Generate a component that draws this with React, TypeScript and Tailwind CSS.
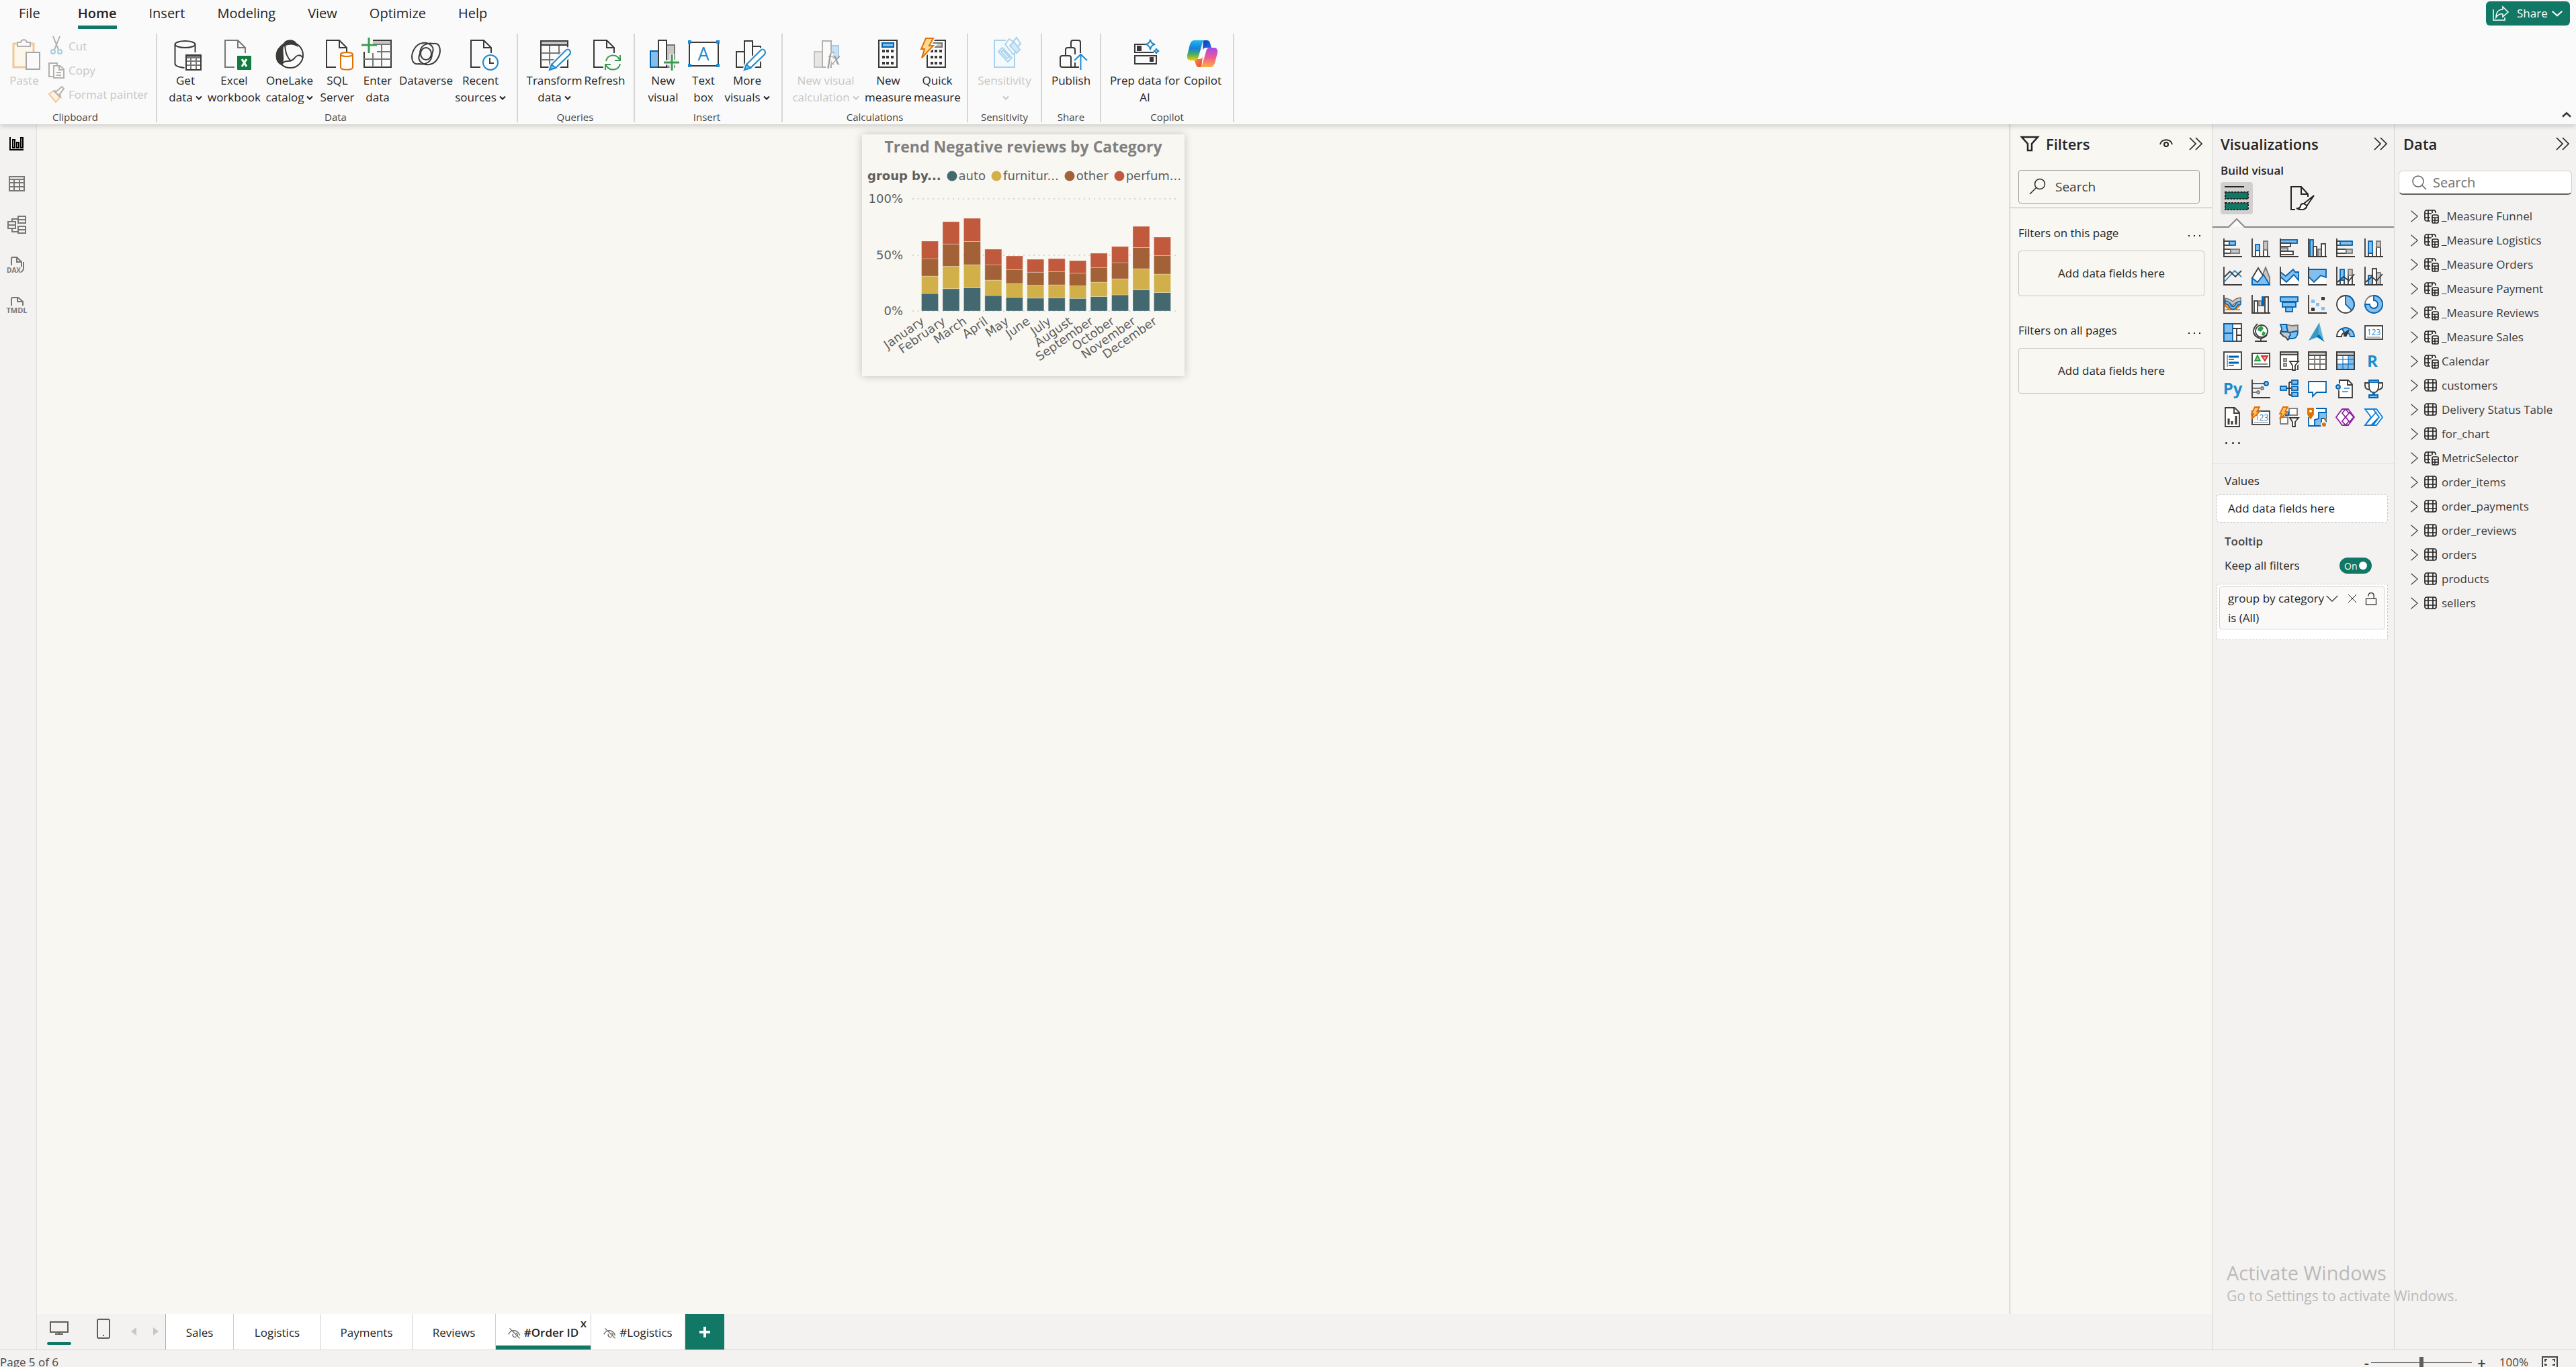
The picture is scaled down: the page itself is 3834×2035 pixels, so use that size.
import React from "react";

const D = "#3b3a39";
const G = "#797775";
const LG = "#c8c6c4";
const B = "#83beec";
const BS = "#0063b1";
const SB = "#1e8bcd";
const GR = "#3d9b51";
const W = "#fafafa";

type P = { children: React.ReactNode };

/* ---------- ribbon icons, drawn on a 48px board ---------- */

const Big = ({ children }: P) => (
  <svg viewBox="0 0 48 48" className="h-12 w-12 shrink-0 overflow-visible" fill="none" stroke={D} strokeWidth="2" aria-hidden="true">
    {children}
  </svg>
);

const Page = ({ x, c = D }: { x: number; c?: string }) => (
  <g stroke={c}>
    <path d={`M${x + 14} 43H${x}V3H${x + 19}L${x + 30} 14V22`} fill="none" />
    <path d={`M${x + 19} 3V14H${x + 30}`} />
  </g>
);

const Pencil = () => (
  <g>
    <path d="M17 48l3-9L41 18q4-4 7 0q2 3-1 6L27 45z" fill={W} stroke={W} strokeWidth="6" />
    <path d="M17 47l3-8L41 18q3-3 6 0q2 3 0 6L26 44z" fill="#fff" stroke={SB} />
    <path d="M17 47l3-8 6 5z" fill={B} stroke={SB} />
  </g>
);

const Bolt = () => <path d="M7 0H18L12 11H18L1 29L5 16H0Z" fill="#ffd992" stroke="#e07000" strokeWidth="2" />;

const Calc = ({ x, c, cs }: { x: number; c: string; cs: string }) => (
  <g>
    <rect x={x} y="3" width="27" height="40" fill={W} />
    <rect x={x + 5} y="7" width="17" height="6" fill={c} stroke={cs} />
    {[17, 26, 35].map((y) =>
      [5, 11, 18].map((dx) => <rect key={`${y}-${dx}`} x={x + dx} y={y} width="4" height="4" fill={D} stroke="none" />)
    )}
  </g>
);

const PasteIcon = () => (
  <Big>
    <rect x="8" y="8" width="30" height="35" stroke="#f2c79a" strokeWidth="3" fill="#fdf6ea" />
    <path d="M14 12V6h5c1-5 8-5 9 0h5v6z" fill={W} stroke="#b3b0ad" />
    <rect x="27" y="21" width="20" height="25" fill="#fafafa" stroke="#a6a6a6" />
  </Big>
);
const GetDataIcon = () => (
  <Big>
    <ellipse cx="23.500" cy="9" rx="15" ry="5" />
    <path d="M8.500 9V38c0 3 6 5 14 6M38.500 9V21" />
    <rect x="25" y="25" width="22" height="22" fill="#fff" />
    <path d="M25 28h22" stroke={G} strokeWidth="4" />
    <path d="M25 34h22M25 40h22M32 30v17M40 30v17" stroke={G} />
    <rect x="25" y="25" width="22" height="22" />
  </Big>
);
const ExcelIcon = () => (
  <Big>
    <Page x={10} c={G} />
    <rect x="28" y="26" width="21" height="21" rx="1" fill="#107c41" stroke="none" />
    <path d="M35 31l7 11M42 31l-7 11" stroke="#fff" strokeWidth="3" />
  </Big>
);
const OneLakeIcon = () => (
  <Big>
    <circle cx="25" cy="25" r="19" />
    <path d="M14 12C17 1 31 0 35 11C28 7 21 8 14 12Z" fill={D} />
    <path d="M12 12C2 18 2 34 12 39C17 32 12 24 14 12Z" fill={D} />
    <path d="M17 10C18 22 20 28 26 34" />
    <path d="M12 39C18 30 24 38 31 30C35 24 40 24 44 29" />
  </Big>
);
const SqlIcon = () => (
  <Big>
    <Page x={8} />
    <path d="M29 24v19c0 5 18 5 18 0V24" fill="#fff" stroke="#e07000" />
    <ellipse cx="38" cy="24" rx="9" ry="3" fill="#fff" stroke="#e07000" />
  </Big>
);
const EnterIcon = () => (
  <Big>
    <rect x="17" y="3" width="27" height="5" fill={LG} stroke="none" />
    <path d="M4 20V43H44V3H17" />
    <path d="M17 9H44M23 20H44M4 31H44M17 22V43M30 9V43" stroke={G} />
    <path d="M11 -1V22M0 10H23" stroke={GR} strokeWidth="3" />
  </Big>
);
const DataverseIcon = () => (
  <Big>
    <ellipse cx="24" cy="23" rx="8" ry="9" />
    <path d="M33 23C33 35 24 40 13 38C2 40 1 26 6 17C12 5 26 4 33 12C36 16 34 21 33 23Z" />
    <path d="M15 23C15 11 24 6 35 8C46 6 47 20 42 29C36 41 22 42 15 34C12 30 14 25 15 23Z" />
  </Big>
);
const RecentIcon = () => (
  <Big>
    <Page x={10} />
    <circle cx="39" cy="36" r="11" fill="#fff" stroke={SB} />
    <path d="M38 29V37H44" />
  </Big>
);
const TransformIcon = () => (
  <Big>
    <rect x="4" y="4" width="40" height="39" />
    <path d="M4 22H44M4 32H44M17 10V43M31 10V43" stroke={G} />
    <rect x="4" y="4" width="40" height="6" fill={LG} />
    <Pencil />
  </Big>
);
const RefreshIcon = () => (
  <Big>
    <Page x={8} />
    <g stroke={GR} strokeWidth="2">
      <path d="M26 34C28 24 42 22 46 32M47 25V33H39" />
      <path d="M47 38C45 48 31 50 26 40M25 47V39H33" />
    </g>
  </Big>
);
const NewVisualIcon = () => (
  <Big>
    <rect x="5" y="19" width="12" height="24" fill={B} stroke={BS} />
    <rect x="29" y="10" width="12" height="33" fill={LG} stroke={G} />
    <rect x="17" y="3" width="12" height="40" fill="#fff" />
    <path d="M37 23V49M24 36H49" stroke={W} strokeWidth="7" />
    <path d="M37 24V48M25 36H48" stroke={GR} strokeWidth="3" />
  </Big>
);
const TextBoxIcon = () => (
  <Big>
    <rect x="3" y="6" width="43" height="35" fill="#fff" />
    {[[1, 3], [43, 3], [1, 38], [43, 38]].map(([x, y]) => (
      <rect key={`${x}-${y}`} x={x} y={y} width="5" height="5" fill={SB} stroke="none" />
    ))}
    <text x="24" y="33" textAnchor="middle" fontSize="27" fill={SB} stroke="none">A</text>
  </Big>
);
const MoreVisualsIcon = () => (
  <Big>
    <rect x="8" y="20" width="12" height="23" />
    <rect x="32" y="12" width="12" height="31" />
    <rect x="20" y="4" width="12" height="39" fill={W} />
    <g transform="translate(3 0)"><Pencil /></g>
  </Big>
);
const VisualCalcIcon = () => (
  <Big>
    <rect x="7" y="20" width="12" height="23" fill="#e6e6e6" stroke="#c2c2c2" />
    <rect x="32" y="11" width="11" height="18" fill="#c9e1f5" stroke="#a6cbe8" />
    <rect x="19" y="4" width="13" height="39" fill={W} stroke="#b3b0ad" />
    <path d="M28 20h8l-6 24h-6z" fill={W} stroke="none" />
    <text x="26" y="39" fontSize="27" fontStyle="italic" fontFamily="Liberation Serif, serif" fill="#9a9a9a" stroke="none">fx</text>
  </Big>
);
const NewMeasureIcon = () => <Big><Calc x={10} c={B} cs={BS} /></Big>;
const QuickMeasureIcon = () => <Big><Calc x={9} c={LG} cs={G} /><path d="M7 0H18L12 11H18L1 29L5 16H0Z" fill={W} stroke={W} strokeWidth="6" /><Bolt /></Big>;
const SensitivityIcon = () => (
  <Big>
    <g stroke="#a9d2ec">
      <path d="M26 3H9V43H39V24" fill="#f3fafe" />
      <path d="M21 15l14 17-6 0z" stroke="none" />
      <path d="M15 20l6-6 14 15-6 6z" fill={W} />
      <path d="M19 20l3-2 9 10-3 2z" />
      <path d="M25 9l6-8 6 4 5-6 6 9-5 5 2 4-8 7z" fill={W} />
      <path d="M32 11l6-6 9 12-5 5z" fill="#d3eaf8" />
    </g>
  </Big>
);
const PublishIcon = () => (
  <Big>
    <path d="M38 22V6q0-3-3-3H27q-3 0-3 3V15M24 43V29q0-3-3-3H11q-3 0-3 3V40q0 3 3 3H36M16 26V17q0-3 3-3h8q3 0 3 3V24M30 36V43" />
    <path d="M38.500 47V24M29 33l9.500-9 9.500 9" stroke={SB} />
  </Big>
);
const PrepIcon = () => (
  <Big>
    <path d="M25 9H9V21H37" /><rect x="9" y="26" width="32" height="12" />
    <rect x="13" y="12" width="5" height="6" fill={D} stroke={D} /><rect x="32" y="29" width="4" height="5" fill={D} stroke={D} />
    <path d="M32 2q1 6 7 7q-6 1-7 8q-1-7-7-8q6-1 7-7z" fill="#fff" stroke={SB} />
    <path d="M41 15q0 3 4 4q-4 1-4 4q0-3-4-4q4-1 4-4z" fill="#fff" stroke={SB} />
  </Big>
);
const CopilotIcon = () => (
  <svg viewBox="0 0 48 48" className="h-12 w-12 overflow-visible" aria-hidden="true">
    <defs>
      <linearGradient id="cpA" x1="0" y1="0" x2="0" y2="1"><stop offset="0" stopColor="#22b8f0" /><stop offset=".4" stopColor="#1580d8" /><stop offset=".7" stopColor="#4cb060" /><stop offset="1" stopColor="#ffcb05" /></linearGradient>
      <linearGradient id="cpB" x1="0" y1="0" x2="0" y2="1"><stop offset="0" stopColor="#a348f0" /><stop offset=".5" stopColor="#ee5a90" /><stop offset="1" stopColor="#ffb040" /></linearGradient>
      <linearGradient id="cpC" x1="0" y1="0" x2="1" y2="1"><stop offset="0" stopColor="#0a36b8" /><stop offset="1" stopColor="#2a78e6" /></linearGradient>
      <linearGradient id="cpD" x1="0" y1="0" x2="1" y2="1"><stop offset="0" stopColor="#ff9a3c" /><stop offset="1" stopColor="#e3403e" /></linearGradient>
    </defs>
    <path d="M25 3h5q4 0 5 4l2 7h-8q-4 0-5 4z" fill="url(#cpC)" />
    <path d="M22 43h-4q-3 0-4-4l-3-8h8q4 0 5-4z" fill="url(#cpD)" />
    <path d="M11 3h16q-3 1-4 6l-5 18q-1 5-5 6H6q-6 0-5-8L5 9q2-6 6-6z" fill="url(#cpA)" />
    <path d="M36 43H19q4-1 5-6l5-17q1-6 5-6h7q6 0 5 8l-4 15q-2 6-6 6z" fill="url(#cpB)" />
  </svg>
);

/* ---------- small icons ---------- */

const Sm = ({ children, className }: P & { className: string }) => (
  <svg viewBox="0 0 24 24" className={`shrink-0 overflow-visible ${className}`} fill="none" stroke="currentColor" strokeWidth="2" aria-hidden="true">
    {children}
  </svg>
);
const DoubleChevron = () => <Sm className="h-6 w-6"><path d="M3 3l9 9-9 9M12 3l9 9-9 9" strokeWidth="1.700" /></Sm>;
const Caret = () => (
  <svg viewBox="0 0 10 8" className="ml-1 inline-block h-2 w-2.5" fill="none" stroke="currentColor" strokeWidth="2" aria-hidden="true">
    <path d="M1 1.500l4 4 4-4" />
  </svg>
);
const HiddenEye = () => (
  <Sm className="h-5 w-5 text-[#605e5c]">
    <path d="M3 4l18 18M1 15q3-7 10-7q8 1 10 9M9 14a4 4 0 0 0 6 5M14 12q4 2 3 6" strokeWidth="1.500" />
  </Sm>
);

/* ---------- visual gallery icons, drawn on a 28px board ---------- */

const ax = <path d="M1 0V27H28" stroke={D} />;
const r = (x: number, y: number, w: number, h: number, f: string, s: string) => (
  <rect key={`${x}-${y}-${w}-${h}`} x={x} y={y} width={w} height={h} fill={f} stroke={s} />
);

const gallery: [string, React.ReactNode][] = [
  ["Stacked bar chart", <>{r(1, 4, 8, 6, "#fff", D)}{r(9, 4, 9, 6, B, BS)}{r(1, 16, 10, 6, "#fff", D)}{r(11, 16, 13, 6, LG, G)}{ax}</>],
  ["Stacked column chart", <>{r(6, 18, 6, 9, "#fff", D)}{r(6, 9, 6, 9, B, BS)}{r(18, 17, 6, 10, "#fff", D)}{r(18, 4, 6, 13, LG, G)}{ax}</>],
  ["Clustered bar chart", <>{r(1, 2, 25, 5, B, BS)}{r(1, 7, 15, 5, "#fff", D)}{r(1, 14, 11, 5, LG, G)}{r(1, 19, 19, 5, "#fff", D)}{ax}</>],
  ["Clustered column chart", <>{r(3, 2, 5, 25, B, BS)}{r(8, 12, 5, 15, "#fff", D)}{r(15, 16, 5, 11, LG, G)}{r(20, 8, 6, 19, "#fff", D)}{ax}</>],
  ["100% stacked bar chart", <>{r(1, 4, 5, 6, "#fff", D)}{r(6, 4, 18, 6, B, BS)}{r(1, 16, 14, 6, "#fff", D)}{r(15, 16, 9, 6, LG, G)}{ax}</>],
  ["100% stacked column chart", <>{r(6, 22, 6, 5, "#fff", D)}{r(6, 4, 6, 18, B, BS)}{r(18, 13, 6, 14, "#fff", D)}{r(18, 4, 6, 9, LG, G)}{ax}</>],
  ["Line chart", <><path d="M2 22L17 6l10 9" stroke={SB} /><path d="M2 15l8-8 8 8 9-9" stroke={D} />{ax}</>],
  ["Area chart", <><path d="M21 1L11 26h16V16z" fill={LG} stroke={G} /><path d="M1 17L10 2l9 14-8 10H1z" fill="#fff" stroke={D} /><path d="M1 17l8 6 9-11 9 15H1z" fill={B} stroke={BS} /></>],
  ["Stacked area chart", <><path d="M1 10l8 5L20 5l3 4h4v18H1z" fill="#fff" stroke="none" /><path d="M1 8l8 6L20 4l3 4h5v12l-7-8-11 11-9-8z" fill={B} stroke={BS} />{ax}</>],
  ["100% stacked area chart", <><path d="M1 4h26v22H1z" fill="#fff" stroke="none" /><path d="M1 4h26v12l-8-3-10 10-8-8z" fill={B} stroke={BS} />{ax}</>],
  ["Line and stacked column chart", <>{r(6, 20, 6, 7, "#fff", D)}{r(6, 4, 6, 16, B, BS)}{r(18, 12, 6, 15, "#fff", D)}{r(18, 4, 6, 9, LG, G)}<path d="M2 23l9-8 8 6 8-10" stroke={D} />{ax}</>],
  ["Line and clustered column chart", <>{r(6, 13, 6, 14, B, BS)}{r(18, 9, 6, 18, LG, G)}{r(12, 3, 6, 24, "#fff", D)}<path d="M2 23l9-8 7 6 9-10" stroke={D} />{ax}</>],
  ["Ribbon chart", <><path d="M3 14h6l5 4 5-4h6v2l-7 6h7H3l6 0-6-5z" fill="#f79420" stroke="#e07000" strokeWidth="1.500" /><path d="M3 5q7 1 11 5q4-5 12-6v6q-8 0-12 6q-5-6-11-6z" fill={LG} stroke={G} strokeWidth="1.500" /><path d="M3 9q6 0 8 6q3 5 7 0q3-6 8-5v4q-5 0-7 5q-5 5-9 0q-3-6-7-6z" fill={B} stroke={BS} strokeWidth="1.500" />{ax}</>],
  ["Waterfall chart", <>{r(4, 9, 5, 18, "#fff", D)}{r(11, 9, 4, 7, LG, G)}{r(16, 3, 2, 13, BS, BS)}{r(20, 3, 5, 24, "#fff", D)}{ax}</>],
  ["Funnel", <>{r(1, 3, 26, 7, B, BS)}{r(4, 11, 20, 7, B, BS)}{r(9, 18, 10, 7, B, BS)}</>],
  ["Scatter chart", <><rect x="5" y="7" width="5" height="5" fill={B} /><rect x="12" y="12" width="5" height="5" fill={B} /><rect x="20" y="18" width="5" height="5" fill={B} /><rect x="20" y="3" width="5" height="5" fill={D} stroke="none" /><rect x="5" y="19" width="5" height="5" fill={D} stroke="none" />{ax}</>],
  ["Pie chart", <><circle cx="14" cy="14" r="13" fill="#fff" stroke={D} /><path d="M14 1V14l9 9A13 13 0 0 0 14 1z" fill={B} stroke={BS} /></>],
  ["Donut chart", <><circle cx="14" cy="14" r="13" fill="#fff" stroke={G} /><path d="M14 1A13 13 0 1 1 1 14h7a6 6 0 1 0 6-6z" fill={B} stroke={BS} /></>],
  ["Treemap", <>{r(1, 1, 26, 26, "#fff", D)}{r(1, 1, 13, 14, B, BS)}{r(1, 15, 13, 12, B, BS)}<path d="M14 8h13M20 8v19M20 18h7" stroke={D} /></>],
  ["Map", <><circle cx="15" cy="12" r="9" fill="#fff" stroke={D} /><path d="M10 7l5-3 3 4-4 5-5-2zM17 12l4 2-2 5-4-1z" fill="#2e9e44" stroke="none" /><path d="M9 1Q-2 12 7 20Q14 26 23 18M14 23v4M5 27h18" stroke={D} /></>],
  ["Filled map", <><path d="M11 2l7 2 9-1v8l-7 5-9-2z" fill={LG} stroke={G} /><path d="M2 11l-1 4 5 5 3 1 3 4 4-3v-8z" fill={LG} stroke={D} /><path d="M1 2h9v4l2 5-2 2H3V8zM15 14l9-2h3q0 7-4 10l-4 1h-5v-3l2-2z" fill={B} stroke={BS} /></>],
  ["Azure map", <><path d="M17-1L1 26l15-6z" fill="#3999c6" stroke="none" /><path d="M17-1l-1 21 8 8z" fill="#59b4d9" stroke="none" /><path d="M12 20l5-3 8 11z" fill="#0072c6" stroke="none" /></>],
  ["Gauge", <><path d="M1 20a13 13 0 0 1 8-12l3 6a7 7 0 0 0-4 6z" fill="#fff" stroke={D} /><path d="M9 8a13 13 0 0 1 18 12h-6a7 7 0 0 0-9-6z" fill={B} stroke={BS} /><path d="M19 10l-4 9h-3v-3z" fill={D} stroke={D} /></>],
  ["Card", <>{r(1, 4, 26, 20, "#fff", D)}<text x="14" y="18" textAnchor="middle" fontSize="12" fill={SB} stroke="none">123</text><path d="M4 21h20" stroke={G} strokeWidth="1" /></>],
  ["Multi-row card", <>{r(1, 1, 26, 26, "#fff", D)}<path d="M6 5v18" stroke={D} strokeWidth="1" /><path d="M8 8h15M8 17h15" stroke={BS} strokeWidth="3" /><path d="M8 12h8M8 21h8" stroke={G} /></>],
  ["KPI", <>{r(1, 3, 26, 20, "#fff", D)}<path d="M9 6l-4 8h8z" fill="#7ccf86" stroke="#2e9e44" /><path d="M15 7h9l-4 7z" fill="#f8a8a8" stroke="#d92c2c" /><path d="M4 19h20" stroke={G} /></>],
  ["Slicer", <>{r(1, 1, 26, 26, "#fff", D)}{r(1, 1, 26, 4, LG, D)}{r(6, 11, 4, 4, LG, G)}{r(6, 18, 4, 4, LG, G)}<path d="M14 14h15v4l-4 4v7h-5v-7l-6-4z" fill={W} stroke="none" /><path d="M15 15h13l-5 6v7h-4v-7z" fill="#fff" stroke={D} /></>],
  ["Table", <>{r(1, 1, 26, 26, "#fff", D)}<path d="M1 12h26M1 19h26M10 6v21M18 6v21" stroke={G} />{r(1, 1, 26, 5, LG, D)}</>],
  ["Matrix", <>{r(1, 1, 26, 26, "#fff", D)}<path d="M18 6h9v21H1v-8h9v-1h8z" fill={B} stroke="none" /><path d="M1 12h26M1 19h26M10 6v21M18 6v21" stroke={BS} strokeWidth="1" />{r(1, 1, 26, 26, "none", D)}{r(1, 1, 26, 5, LG, D)}</>],
  ["R script visual", <text x="12" y="23" textAnchor="middle" fontSize="24" fontWeight="700" fill={SB} stroke="none">R</text>],
  ["Python visual", <text x="14" y="22" textAnchor="middle" fontSize="24" fontWeight="700" fill={SB} stroke="none">Py</text>],
  ["Key influencers", <><path d="M1 6h18" stroke={BS} /><circle cx="22" cy="6" r="3" fill={B} stroke={BS} /><path d="M1 13h12M1 19h7" stroke={G} /><circle cx="16" cy="13" r="2" fill={LG} stroke={G} /><circle cx="10" cy="19" r="2" fill={LG} stroke={G} />{ax}</>],
  ["Decomposition tree", <><path d="M10 13h7M14 4v19M14 4h3M14 23h3" stroke={D} />{r(1, 10, 9, 6, B, BS)}{r(18, 1, 9, 6, B, BS)}{r(18, 10, 9, 6, B, BS)}{r(18, 19, 9, 6, B, BS)}</>],
  ["Q&A", <path d="M1 3h26v16H13l-6 6v-6H1z" fill="#fff" stroke={BS} />],
  ["Smart narrative", <><path d="M5 6V1h13l6 6v20H4V16" fill="#fff" stroke={D} /><path d="M17 1v7h7" stroke={D} /><circle cx="3" cy="11" r="3" fill={B} stroke={BS} /><path d="M12 13h8M9 18h9" stroke={SB} strokeWidth="1.500" /></>],
  ["Metrics", <><path d="M7 5H1v4q0 6 7 6M21 5h6v4q0 6-7 6" stroke={D} /><path d="M7 3h14v8q0 7-7 9q-7-2-7-9z" fill="#fff" stroke={D} />{r(7, 1, 14, 3, B, BS)}<path d="M13 19h2v4h5v4H7v-4h6z" fill={B} stroke={BS} /></>],
  ["Paginated report", <><path d="M3 0h14l7 7v21H3z" fill="#fff" stroke={D} /><path d="M16 0v8h8" stroke={D} /><path d="M8 16v9M13 20v5M19 12v13" stroke={D} strokeWidth="3" /></>],
  ["New card", <>{r(1, 5, 26, 20, "#fff", D)}<text x="15" y="19" textAnchor="middle" fontSize="12" fill={SB} stroke="none">123</text><path d="M4 22h20" stroke={G} strokeWidth="1" /><path d="M5-1h7L8 6h4L0 17l3-8h-3z" fill="#ffc069" stroke="#e07000" /></>],
  ["New slicer", <>{r(14, 1, 12, 10, "#fff", G)}{r(1, 14, 11, 10, "#fff", G)}<path d="M14 13h15v4l-4 4v7h-5v-7l-6-4z" fill={W} stroke="none" /><path d="M15 15h13l-5 6v7h-4v-7z" fill="#fff" stroke={D} /><path d="M8 11h5V6" fill={B} stroke={BS} /><path d="M5-1h7L8 6h4L0 17l3-8h-3z" fill="#ffc069" stroke="#e07000" /></>],
  ["ArcGIS map", <><path d="M12 1h15v26H1V14" fill="#fff" stroke={BS} /><path d="M27 1v6H16v9l-6 2v9h10V16h7" fill={B} stroke={BS} /><path d="M0 1h8v9l-4 6-4-6z" fill="#e07000" stroke="#e07000" /><circle cx="4" cy="5" r="2" fill="#fff" stroke="none" /><circle cx="24" cy="25" r="4" fill="#e07000" stroke={W} /><circle cx="26" cy="17" r="2" fill="#e07000" stroke="none" /></>],
  ["Power Apps", <><path d="M9 2h9l9 12-9 12H9L0 14z" fill="#fff" stroke="#8e24a0" /><path d="M14 14l6-7 6 7-6 7zM9 20l5-6 5 6-5 6zM9 8l5-6 5 6-5 6z" fill="#fff" stroke="#8e24a0" /></>],
  ["Power Automate", <><path d="M1 2h17l9 12-9 12H1l9-12z" fill="#fff" stroke="#0b7fe0" /><path d="M1 2h12l9 12-9 12M1 26L18 6M10 26l12-12" stroke="#0b7fe0" /></>],
];

/* ---------- ribbon ---------- */

type Item = { lines: string[]; icon: React.ReactNode; w: string; caret?: boolean; off?: boolean };

const RibbonButton = ({ lines, icon, w, caret, off }: Item) => (
  <button type="button" disabled={off} className={`flex flex-col items-center ${w} ${off ? "text-[#c8c6c4]" : "text-[#252423]"}`}>
    {icon}
    <span className="mt-0.5 flex flex-col text-center text-[17px] leading-[25px] whitespace-nowrap">
      {lines.map((l, i) => (
        <span key={l || "caret"}>
          {l}
          {caret && i === lines.length - 1 && <Caret />}
        </span>
      ))}
    </span>
  </button>
);

const RibbonGroup = ({ name, pad, children }: P & { name: string; pad: string }) => (
  <section aria-label={name} className={`flex h-[132px] flex-col justify-between border-r-2 border-[#d6d6d6] ${pad}`}>
    <div className="flex items-start pt-[7px]">{children}</div>
    <div className="text-center text-[15px] leading-4 text-[#484644]">{name}</div>
  </section>
);

const groups: { name: string; pad: string; items: Item[] }[] = [
  {
    name: "Data",
    pad: "pl-3 pr-4",
    items: [
      { lines: ["Get", "data"], caret: true, icon: <GetDataIcon />, w: "w-[60px]" },
      { lines: ["Excel", "workbook"], icon: <ExcelIcon />, w: "w-[85px]" },
      { lines: ["OneLake", "catalog"], caret: true, icon: <OneLakeIcon />, w: "w-[80px]" },
      { lines: ["SQL", "Server"], icon: <SqlIcon />, w: "w-[62px]" },
      { lines: ["Enter", "data"], icon: <EnterIcon />, w: "w-[58px]" },
      { lines: ["Dataverse"], icon: <DataverseIcon />, w: "w-[86px]" },
      { lines: ["Recent", "sources"], caret: true, icon: <RecentIcon />, w: "w-[76px]" },
    ],
  },
  {
    name: "Queries",
    pad: "pl-2.5 pr-3",
    items: [
      { lines: ["Transform", "data"], caret: true, icon: <TransformIcon />, w: "w-[88px]" },
      { lines: ["Refresh"], icon: <RefreshIcon />, w: "w-[62px]" },
    ],
  },
  {
    name: "Insert",
    pad: "pl-3 pr-4",
    items: [
      { lines: ["New", "visual"], icon: <NewVisualIcon />, w: "w-[60px]" },
      { lines: ["Text", "box"], icon: <TextBoxIcon />, w: "w-[60px]" },
      { lines: ["More", "visuals"], caret: true, icon: <MoreVisualsIcon />, w: "w-[70px]" },
    ],
  },
  {
    name: "Calculations",
    pad: "px-2",
    items: [
      { lines: ["New visual", "calculation"], caret: true, off: true, icon: <VisualCalcIcon />, w: "w-[112px]" },
      { lines: ["New", "measure"], icon: <NewMeasureIcon />, w: "w-[74px]" },
      { lines: ["Quick", "measure"], icon: <QuickMeasureIcon />, w: "w-[72px]" },
    ],
  },
  { name: "Sensitivity", pad: "px-3", items: [{ lines: ["Sensitivity", ""], caret: true, off: true, icon: <SensitivityIcon />, w: "w-[84px]" }] },
  { name: "Share", pad: "px-2", items: [{ lines: ["Publish"], icon: <PublishIcon />, w: "w-[70px]" }] },
  {
    name: "Copilot",
    pad: "px-3",
    items: [
      { lines: ["Prep data for", "AI"], icon: <PrepIcon />, w: "w-[106px]" },
      { lines: ["Copilot"], icon: <CopilotIcon />, w: "w-[66px]" },
    ],
  },
];

const Ribbon = () => (
  <header className="relative z-10 bg-[#fafafa] shadow-[0_2px_8px_rgba(0,0,0,0.2)]">
    <div className="flex h-11 items-start justify-between pr-[9px]">
      <nav aria-label="Ribbon tabs" className="flex pl-1">
        {["File", "Home", "Insert", "Modeling", "View", "Optimize", "Help"].map((t) => (
          <button key={t} type="button" className={`flex flex-col px-6 text-[20px] leading-10 text-[#252423] ${t === "File" ? "mr-2" : ""}`}>
            {t === "Home" ? <span className="h-[43px] border-b-5 border-[#117865] font-semibold">{t}</span> : t}
          </button>
        ))}
      </nav>
      <button type="button" className="mt-0.5 flex h-9 w-[125px] items-center rounded-md bg-[#117865] pl-2.5 text-[17px] text-white">
        <Sm className="h-6 w-6"><path d="M1 6V22H18V18M5 18C5 9 10 6 15 6V2l8 8-8 7v-4c-5-1-8 2-10 5z" strokeWidth="1.500" /></Sm>
        <span className="ml-3">Share</span>
        <Sm className="ml-1.5 h-4 w-4"><path d="M1 7l11 10L23 7" strokeWidth="3" /></Sm>
      </button>
    </div>
    <div className="flex h-[141px] items-start pt-1.5">
      <RibbonGroup name="Clipboard" pad="w-[234px] pl-3 pr-5">
        <button type="button" disabled className="flex w-12 shrink-0 flex-col items-center text-[17px] text-[#c8c6c4]">
          <PasteIcon />
          <span className="mt-0.5 leading-[25px]">Paste</span>
        </button>
        <div className="-mt-1.5 flex flex-col pl-3 text-[17px] leading-9 whitespace-nowrap text-[#c8c6c4]">
          <button type="button" disabled className="flex items-center gap-1.5">
            <Sm className="h-6 w-6"><path d="M7-3l8 20M17-3l-8 20" stroke="#b3b0ad" /><g stroke="#9fcbe6"><circle cx="7" cy="20" r="3" /><circle cx="17" cy="20" r="3" /></g></Sm>
            Cut
          </button>
          <button type="button" disabled className="flex items-center gap-1.5">
            <Sm className="h-6 w-6"><path d="M8 21H1V1h12v3M8 5h9l6 5v13H8zM16 5v6h7M12 15h7M12 19h7" stroke="#b3b0ad" /></Sm>
            Copy
          </button>
          <button type="button" disabled className="flex items-center gap-1.5">
            <Sm className="h-6 w-6"><path d="M1 11l7-5 9 10-6 7z" fill="#fdf3e3" stroke="#f2c79a" /><path d="M8 6l4 1 8-7 3 3-6 8 1 4z" fill={W} stroke="#b3b0ad" /></Sm>
            Format painter
          </button>
        </div>
      </RibbonGroup>
      {groups.map((g) => (
        <RibbonGroup key={g.name} name={g.name} pad={g.pad}>
          {g.items.map((it) => <RibbonButton key={it.lines.join(" ")} {...it} />)}
        </RibbonGroup>
      ))}
      <button type="button" aria-label="Collapse ribbon" className="mr-1.5 mb-1.5 ml-auto self-end text-[#3b3a39]">
        <Sm className="h-4 w-4"><path d="M3 16l9-8 9 8" strokeWidth="4" /></Sm>
      </button>
    </div>
  </header>
);

/* ---------- left rail ---------- */

const RailButton = ({ label, children }: P & { label: string }) => (
  <button type="button" aria-label={label} className="flex h-[60px] items-center justify-center text-[#797775]">
    <svg viewBox="0 0 28 28" className="h-7 w-7 overflow-visible" fill="none" stroke="currentColor" strokeWidth="2" aria-hidden="true">{children}</svg>
  </button>
);

const Rail = () => (
  <nav aria-label="Views" className="flex w-[55px] shrink-0 flex-col border-r border-[#e1dfdd] pr-1">
    <RailButton label="Report view"><g stroke="#000"><path d="M4 3V22H24" /><path d="M8 7h3v12H8zM14 11h3v8h-3zM20 4h3v15h-3z" /></g></RailButton>
    <RailButton label="Table view"><path d="M3 2h22v21H3zM3 6h22M3 11h22M3 17h22M10 6v17M18 6v17" /></RailButton>
    <RailButton label="Model view"><path d="M1 9h11v10H1zM1 14h11M16 1h11v10H16zM16 6h11M16 16h11v10H16zM16 21h11M7 9V5h9M7 19v5h9" /></RailButton>
    <RailButton label="DAX query view">
      <path d="M6 14V4q0-2 2-2h6l7 7v7M14 2v7h7M24 9v9q0 4-4 6" />
      <text x="-1" y="25" fontSize="10" fontWeight="700" fill="currentColor" stroke="none">DAX</text>
    </RailButton>
    <RailButton label="TMDL view">
      <path d="M6 14V4q0-2 2-2h8l7 6v6M15 2v6h8" />
      <text x="14" y="25" textAnchor="middle" fontSize="11" fontWeight="700" fill="currentColor" stroke="none">TMDL</text>
    </RailButton>
  </nav>
);

/* ---------- chart ---------- */

const months: [string, number][] = [
  ["January", 104], ["February", 133], ["March", 138], ["April", 92], ["May", 82], ["June", 77],
  ["July", 78], ["August", 75], ["September", 86], ["October", 96], ["November", 126], ["December", 110],
];
const stack = ["#436870", "#d1b04a", "#a36138", "#c15a3d"];
const legend: [string, string][] = [["auto", stack[0]], ["furnitur...", stack[1]], ["other", stack[2]], ["perfum...", stack[3]]];

const ChartCard = () => (
  <figure className="mx-auto mt-[15px] flex h-[360px] w-[480px] flex-col bg-[#f8f7f2] font-['DejaVu_Sans',sans-serif] text-[#605e5c] shadow-[0_0_12px_rgba(0,0,0,0.22)]">
    <figcaption className="pt-0.5 text-center font-['Open_Sans',sans-serif] text-[23px] leading-8 font-bold whitespace-nowrap text-[#808080]">
      Trend Negative reviews by Category
    </figcaption>
    <div className="mt-4 flex items-center gap-2 pl-2 text-[18px] leading-6 whitespace-nowrap">
      <span className="font-bold">group by...</span>
      {legend.map(([n, c]) => (
        <span key={n} className="flex items-center gap-0.5">
          <svg viewBox="0 0 16 16" className="h-4 w-4" aria-hidden="true"><circle cx="8" cy="8" r="7.500" fill={c} /></svg>
          {n}
        </span>
      ))}
    </div>
    <svg viewBox="0 74 480 286" className="min-h-0 flex-1" fontSize="18" fill="#605e5c" role="img" aria-label="Stacked columns by month">
      {[["100%", 96], ["50%", 180], ["0%", 263]].map(([t, y]) => (
        <g key={t}>
          <text x="61" y={Number(y) + 6} textAnchor="end">{t}</text>
          <line x1="75" x2="468" y1={y} y2={y} stroke="#d8d6d2" strokeWidth="2" strokeDasharray="2 5.500" />
        </g>
      ))}
      {months.map(([m, h], i) => {
        const x = 88 + i * 31.450;
        return (
          <g key={m}>
            {stack.map((c, k) => (
              <rect key={c} x={x + 0.5} y={263 - ((k + 1) * h) / 4} width="25" height={h / 4} fill={c} stroke="#fff" strokeOpacity=".3" />
            ))}
            <text transform={`translate(${x + 6} 281) rotate(-35)`} textAnchor="end">{m}</text>
          </g>
        );
      })}
    </svg>
  </figure>
);

/* ---------- panes ---------- */

const PaneTitle = ({ title, icon, extra }: { title: string; icon?: React.ReactNode; extra?: React.ReactNode }) => (
  <div className="flex h-[58px] items-center">
    {icon}
    <h2 className="flex-1 text-[22px] font-semibold text-[#252423]">{title}</h2>
    {extra}
    <button type="button" aria-label={`Collapse ${title}`}><DoubleChevron /></button>
  </div>
);

const FilterSection = ({ title }: { title: string }) => (
  <section className="mb-[39px] pr-[11px] pl-3">
    <div className="flex items-center justify-between pr-1.5 text-[17px] leading-6">
      <h3>{title}</h3>
      <button type="button" aria-label={`${title} options`}>
        <svg viewBox="0 0 18 24" className="h-6 w-[18px]" fill="currentColor" aria-hidden="true"><path d="M0 15h2v2H0zM8 15h2v2H8zM16 15h2v2h-2z" /></svg>
      </button>
    </div>
    <div className="mt-3.5 flex h-[68px] items-center justify-center rounded-sm border border-[#c8c6c4] text-[17px]">Add data fields here</div>
  </section>
);

const FiltersPane = () => (
  <aside aria-label="Filters" className="flex w-[301px] shrink-0 flex-col border-l border-[#b3b0ad]">
    <div className="pr-3 pl-[17px]">
      <PaneTitle
        title="Filters"
        icon={<Sm className="mr-3 h-6 w-6"><path d="M0 2H24L15 12V22H9V12Z" strokeWidth="2.500" /></Sm>}
        extra={
          <button type="button" aria-label="Show filters" className="mr-5">
            <Sm className="h-6 w-6"><path d="M3 13C5 4 19 4 21 13" /><circle cx="12" cy="13" r="3" /></Sm>
          </button>
        }
      />
    </div>
    <div className="border-b border-[#b3b0ad] pt-2.5 pr-[18px] pb-1.5 pl-3">
      <label className="flex h-[50px] items-center rounded-sm border border-[#a19f9d] pl-4">
        <Sm className="h-6 w-6"><circle cx="15" cy="8" r="7.500" strokeWidth="1.500" /><path d="M10 13L0 23" strokeWidth="1.500" /></Sm>
        <input aria-label="Search filters" placeholder="Search" className="ml-3.5 w-full min-w-0 bg-transparent text-[19px] outline-none placeholder:text-[#3b3a39]" />
      </label>
    </div>
    <div className="pt-[25px]">
      <FilterSection title="Filters on this page" />
      <FilterSection title="Filters on all pages" />
    </div>
  </aside>
);

const VisualizationsPane = () => (
  <aside aria-label="Visualizations" className="flex w-[271px] shrink-0 flex-col border-l border-[#d8d6d3] text-[17px] text-[#252423]">
    <div className="pr-2 pl-3">
      <PaneTitle title="Visualizations" />
      <h3 className="leading-[22px] font-semibold">Build visual</h3>
      <div className="mt-1.5 flex gap-[50px]">
        <button type="button" aria-label="Build visual" className="flex h-12 w-12 items-center justify-center rounded bg-[#d2d0ce]">
          <svg viewBox="0 0 36 36" className="h-9 w-9" fill="#117865" stroke="#252423" strokeWidth="2" aria-hidden="true">
            <path d="M0 1H29" />
            <rect x="1" y="9" width="34" height="10" strokeDasharray="3 1.500" />
            <rect x="1" y="25" width="34" height="10" strokeDasharray="3 1.500" />
          </svg>
        </button>
        <button type="button" aria-label="Format page" className="flex h-12 w-12 items-center justify-center">
          <svg viewBox="0 0 36 36" className="h-9 w-9" fill="none" stroke="#252423" strokeWidth="2" aria-hidden="true">
            <path d="M7 35H1V1H16L26 12V16M16 1V12H25" />
            <path d="M35 14L24 30L20 26Z" fill="#fff" /><path d="M20 26q-5 0-5 4q-1 4-6 3q8 4 12 1q4-2 3-5z" fill="#fff" />
          </svg>
        </button>
      </div>
    </div>
    <svg viewBox="0 0 270 14" preserveAspectRatio="xMinYMin slice" className="mt-1.5 h-3.5 w-full" fill="#faf9f8" stroke="#8a8886" strokeWidth="2" aria-hidden="true">
      <path d="M-2 13H24L36 1L48 13H272" />
    </svg>
    <div className="grid grid-cols-[repeat(6,42px)] pt-[9px] pl-[9px]">
      {gallery.map(([name, art]) => (
        <button key={name} type="button" aria-label={name} title={name} className="flex h-[42px] items-center justify-center">
          <svg viewBox="0 0 28 28" className="h-7 w-7 overflow-visible" fill="none" strokeWidth="1.800" aria-hidden="true">{art}</svg>
        </button>
      ))}
    </div>
    <button type="button" aria-label="More visuals" className="mt-[3px] ml-[19px] flex h-7 w-[22px] items-center justify-between">
      {[0, 1, 2].map((i) => <span key={i} className="h-[3px] w-[3px] rounded-full bg-[#252423]" />)}
    </button>
    <div className="mt-4 border-t border-[#e1dfdd] pt-3.5 pr-[9px] pl-1.5">
      <h3 className="pl-3 leading-6">Values</h3>
      <div className="mt-2 flex h-[42px] items-center rounded border border-dashed border-[#c8c6c4] bg-white pl-4">Add data fields here</div>
      <h3 className="mt-4 pl-3 leading-6 font-semibold text-[#484644]">Tooltip</h3>
      <label className="mt-3 flex h-6 items-center justify-between pr-6 pl-3">
        Keep all filters
        <input type="checkbox" defaultChecked className="peer sr-only" />
        <span className="flex h-6 w-12 items-center justify-between rounded-full bg-[#117865] px-[7px] text-[14px] text-white">
          On<span className="h-3 w-3 rounded-full bg-white" />
        </span>
      </label>
      <div className="mt-[15px] h-[84px] rounded border border-dashed border-[#c8c6c4] bg-white p-[3px]">
        <div className="h-16 rounded-sm border border-[#d8d6d3] bg-[#faf9f8] pr-2.5 pl-3">
          <div className="flex h-[34px] items-center">
            <span className="w-[145px] overflow-hidden whitespace-nowrap">group by category</span>
            <button type="button" aria-label="Field options"><Sm className="h-5 w-5"><path d="M2 7l10 10 10-10" strokeWidth="1.500" /></Sm></button>
            <button type="button" aria-label="Remove field" className="ml-3"><Sm className="h-4 w-4"><path d="M3 3l18 18M21 3L3 21" strokeWidth="1.500" /></Sm></button>
            <button type="button" aria-label="Lock filter" className="ml-auto"><Sm className="h-5 w-5"><path d="M3 12h18v11H3zM7 8q0-6 5-6t5 5v5" strokeWidth="1.500" /></Sm></button>
          </div>
          <div className="leading-6">is (All)</div>
        </div>
      </div>
    </div>
  </aside>
);

const tables: [string, boolean][] = [
  ["_Measure Funnel", true], ["_Measure Logistics", true], ["_Measure Orders", true], ["_Measure Payment", true],
  ["_Measure Reviews", true], ["_Measure Sales", true], ["Calendar", true], ["customers", false],
  ["Delivery Status Table", false], ["for_chart", false], ["MetricSelector", true], ["order_items", false],
  ["order_payments", false], ["order_reviews", false], ["orders", false], ["products", false], ["sellers", false],
];

const TableIcon = ({ calc }: { calc: boolean }) => (
  <svg viewBox="0 0 22 22" className="mr-1 h-[22px] w-[22px] overflow-visible" fill="none" stroke="#252423" strokeWidth="1.700" aria-hidden="true">
    {calc ? (
      <>
        <path d="M9 18H4q-3 0-3-3V5q0-3 3-3h10q3 0 3 3v1M1 7h10M1 13h8M6 2v16M12 2v4" />
        <rect x="12" y="9" width="9" height="12" rx="2" fill="#f3f2f1" />
        <path d="M12 13h9M12 17h9M16 13v8" strokeWidth="1.500" />
      </>
    ) : (
      <><rect x="1" y="2" width="17" height="17" rx="3" /><path d="M1 7h17M1 14h17M6 2v17M13 2v17" /></>
    )}
  </svg>
);

const DataPane = () => (
  <aside aria-label="Data" className="flex w-[271px] shrink-0 flex-col border-l border-[#d8d6d3]">
    <div className="pr-2 pl-[13px]"><PaneTitle title="Data" /></div>
    <label className="mx-1.5 mt-[11px] flex h-9 items-center rounded-md border border-b-2 border-[#d1d1d1] border-b-[#616161] bg-white pl-[18px] text-[#616161]">
      <Sm className="h-6 w-6"><circle cx="10" cy="10" r="8" strokeWidth="1.500" /><path d="M16 16l6 6" strokeWidth="1.500" /></Sm>
      <input aria-label="Search data" placeholder="Search" className="ml-2 w-full min-w-0 bg-transparent text-[20px] outline-none placeholder:text-[#707070]" />
    </label>
    <ul className="pt-[14px] pl-5">
      {tables.map(([name, calc]) => (
        <li key={name}>
          <button type="button" aria-expanded="false" className="flex h-9 w-full items-center text-[17px] whitespace-nowrap text-[#3b3a39]">
            <Sm className="mr-1.5 h-[18px] w-[18px]"><path d="M6 1l13 11L6 23" strokeWidth="1.500" /></Sm>
            <TableIcon calc={calc} />
            {name}
          </button>
        </li>
      ))}
    </ul>
  </aside>
);

/* ---------- page tabs and status bar ---------- */

const tabs: { name: string; w: string; hidden?: boolean; active?: boolean }[] = [
  { name: "Sales", w: "w-[101px]" },
  { name: "Logistics", w: "w-[130px]" },
  { name: "Payments", w: "w-[136px]" },
  { name: "Reviews", w: "w-[124px]" },
  { name: "#Order ID", w: "w-[142px]", hidden: true, active: true },
  { name: "#Logistics", w: "w-[140px]", hidden: true },
];

const PageTabs = () => (
  <div className="flex h-[53px] shrink-0 items-stretch text-[17px] text-[#252423]">
    <div className="flex w-[192px] items-start border-r border-[#b3b0ad] text-[#605e5c]">
      <button type="button" aria-label="Desktop layout" className="ml-[15px] flex h-[46px] w-9 flex-col items-center justify-between pt-2">
        <svg viewBox="0 0 30 26" className="h-[26px] w-[30px]" fill="none" stroke="currentColor" strokeWidth="2" aria-hidden="true"><path d="M2 4h26v15H2zM15 19v3M9 22h12" /></svg>
        <span className="h-1 w-full rounded-full bg-[#117865]" />
      </button>
      <button type="button" aria-label="Mobile layout" className="mt-1.5 ml-[38px]">
        <svg viewBox="0 0 20 32" className="h-8 w-5" fill="none" stroke="currentColor" strokeWidth="2" aria-hidden="true"><rect x="1" y="2" width="18" height="28" rx="2" /><path d="M9 26h2" /></svg>
      </button>
      <button type="button" aria-label="Previous page" className="mt-[18px] ml-[30px]"><svg viewBox="0 0 10 16" className="h-4 w-2.5" fill="#c8c6c4" aria-hidden="true"><path d="M9 2v12L1 8z" /></svg></button>
      <button type="button" aria-label="Next page" className="mt-[18px] ml-[23px]"><svg viewBox="0 0 10 16" className="h-4 w-2.5" fill="#c8c6c4" aria-hidden="true"><path d="M1 2v12l8-6z" /></svg></button>
    </div>
    {tabs.map((t) => (
      <button
        key={t.name}
        type="button"
        className={`relative flex items-center justify-center gap-1 border-r border-[#d2d0ce] bg-white pt-0.5 whitespace-nowrap ${t.w} ${t.active ? "font-semibold" : ""}`}
      >
        {t.hidden && <HiddenEye />}
        {t.name}
        {t.active && <span className="absolute inset-x-0 bottom-0 h-1.5 bg-[#117865]" />}
        {t.active && <span className="absolute top-0.5 right-1.5 text-[17px] leading-6">x</span>}
      </button>
    ))}
    <button type="button" aria-label="New page" className="flex w-[58px] items-center justify-center bg-[#117865] text-white">
      <svg viewBox="0 0 18 18" className="h-[18px] w-[18px]" stroke="currentColor" strokeWidth="4" aria-hidden="true"><path d="M9 1V17M1 9H17" /></svg>
    </button>
  </div>
);

const StatusBar = () => (
  <footer className="h-[26px] shrink-0 overflow-hidden border-t border-[#d8d6d3] text-[17px] text-[#484644]">
    <div className="flex h-9 items-center justify-between pr-[27px]">
      <span>Page 5 of 6</span>
      <div className="flex items-center">
        <button type="button" aria-label="Zoom out" className="w-3.5 text-[22px] font-semibold">-</button>
        <input
          type="range"
          min="10"
          max="190"
          defaultValue="100"
          aria-label="Zoom"
          className="h-4 w-[150px] appearance-none bg-[linear-gradient(#605e5c,#605e5c)] bg-[length:100%_1px] bg-center bg-no-repeat [&::-webkit-slider-thumb]:h-4 [&::-webkit-slider-thumb]:w-1.5 [&::-webkit-slider-thumb]:appearance-none [&::-webkit-slider-thumb]:bg-[#605e5c]"
        />
        <button type="button" aria-label="Zoom in" className="ml-2 text-[22px] font-semibold">+</button>
        <span className="ml-5">100%</span>
        <button type="button" aria-label="Fit to page" className="ml-5">
          <svg viewBox="0 0 24 18" className="h-[18px] w-6" fill="none" stroke="currentColor" strokeWidth="2" aria-hidden="true"><path d="M1 1h22v16H1zM5 8V5h3M16 5h3v3M5 11v2h3M16 13h3v-2" /></svg>
        </button>
      </div>
    </div>
  </footer>
);

export default function App() {
  return (
    <div className="relative flex h-screen flex-col overflow-hidden bg-[#f3f2f1] font-['Open_Sans','Noto_Sans',sans-serif] text-[#252423]">
      <Ribbon />
      <div className="flex min-h-0 flex-1">
        <Rail />
        <div className="flex min-w-0 flex-1 flex-col">
          <div className="flex min-h-0 flex-1 bg-[#f8f7f2]">
            <main className="min-w-0 flex-1"><ChartCard /></main>
            <FiltersPane />
          </div>
          <PageTabs />
        </div>
        <VisualizationsPane />
        <DataPane />
      </div>
      <StatusBar />
      <div className="pointer-events-none absolute right-44 bottom-[90px] text-[#bbbab9]">
        <div className="text-[29px] leading-9">Activate Windows</div>
        <div className="text-[21px] leading-8">Go to Settings to activate Windows.</div>
      </div>
    </div>
  );
}
